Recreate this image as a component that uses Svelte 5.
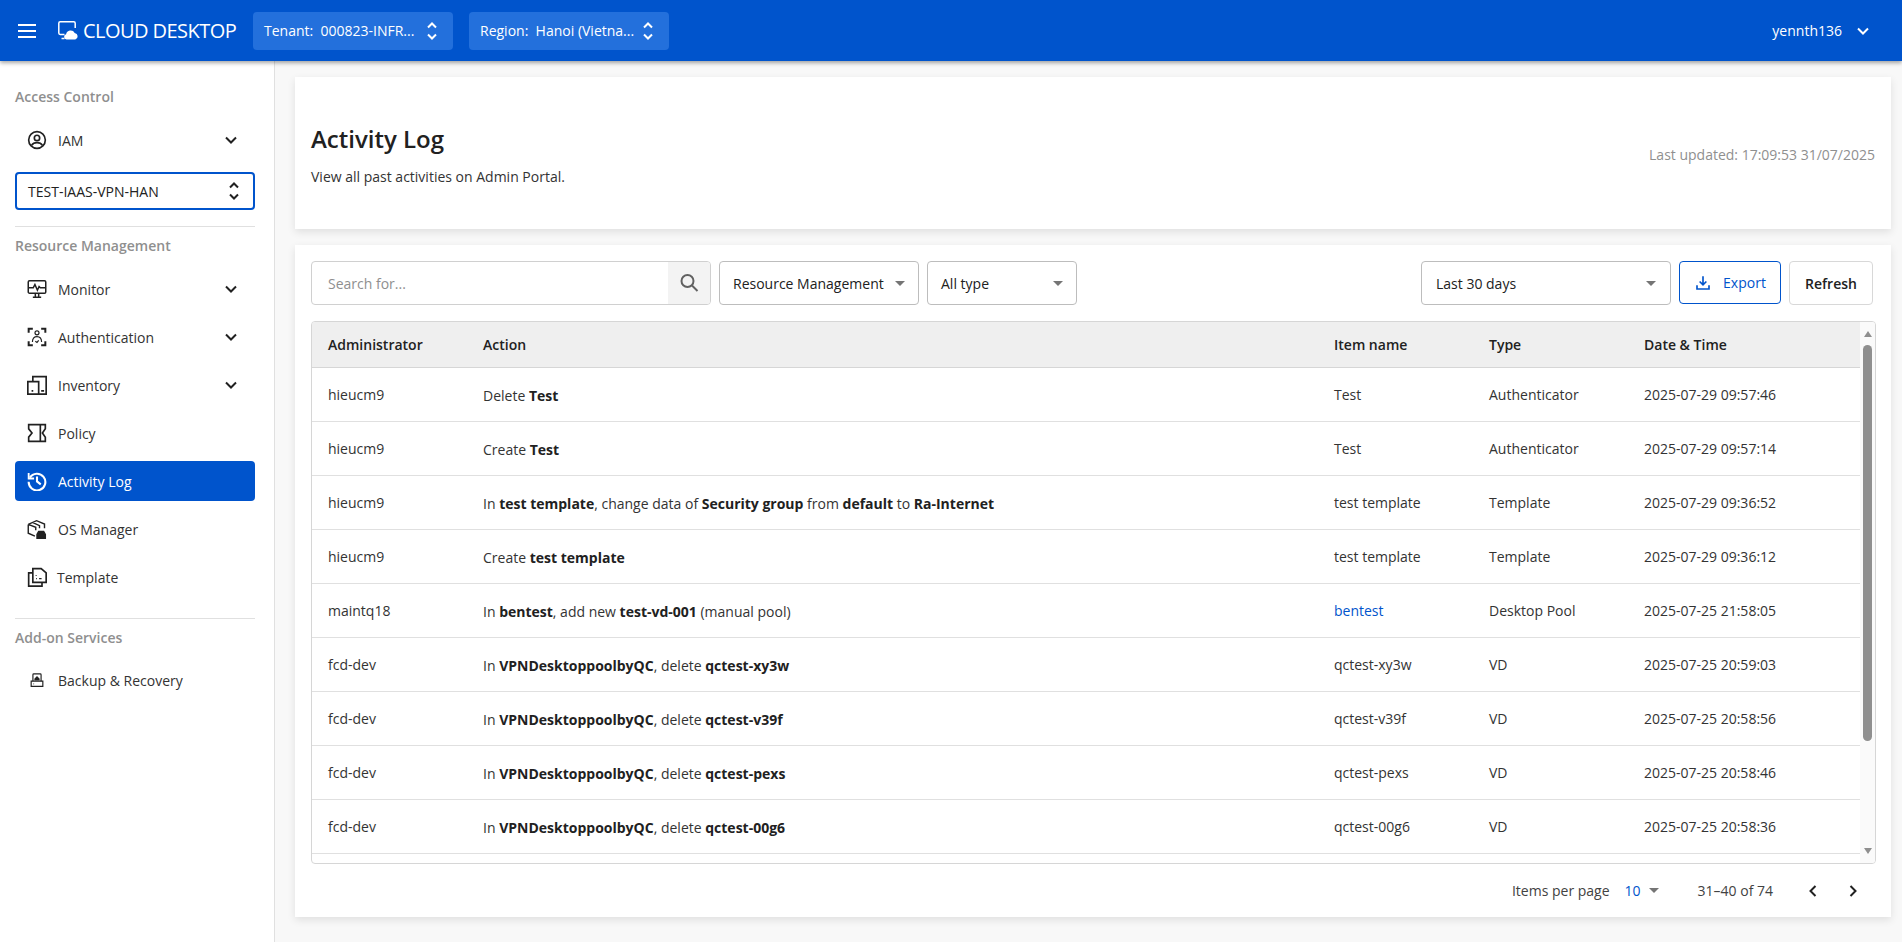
<script>
  const rows = [
    ['hieucm9', [['Delete '], ['Test', 1]], 'Test', 'Authenticator', '2025-07-29 09:57:46'],
    ['hieucm9', [['Create '], ['Test', 1]], 'Test', 'Authenticator', '2025-07-29 09:57:14'],
    ['hieucm9', [['In '], ['test template', 1], [', change data of '], ['Security group', 1], [' from '], ['default', 1], [' to '], ['Ra-Internet', 1]], 'test template', 'Template', '2025-07-29 09:36:52'],
    ['hieucm9', [['Create '], ['test template', 1]], 'test template', 'Template', '2025-07-29 09:36:12'],
    ['maintq18', [['In '], ['bentest', 1], [', add new '], ['test-vd-001', 1], [' (manual pool)']], 'bentest', 'Desktop Pool', '2025-07-25 21:58:05', true],
    ['fcd-dev', [['In '], ['VPNDesktoppoolbyQC', 1], [', delete '], ['qctest-xy3w', 1]], 'qctest-xy3w', 'VD', '2025-07-25 20:59:03'],
    ['fcd-dev', [['In '], ['VPNDesktoppoolbyQC', 1], [', delete '], ['qctest-v39f', 1]], 'qctest-v39f', 'VD', '2025-07-25 20:58:56'],
    ['fcd-dev', [['In '], ['VPNDesktoppoolbyQC', 1], [', delete '], ['qctest-pexs', 1]], 'qctest-pexs', 'VD', '2025-07-25 20:58:46'],
    ['fcd-dev', [['In '], ['VPNDesktoppoolbyQC', 1], [', delete '], ['qctest-00g6', 1]], 'qctest-00g6', 'VD', '2025-07-25 20:58:36']
  ];
</script>

{#snippet updown()}
  <svg class="updown" viewBox="0 0 12 24" width="12" height="24" fill="none" stroke="currentColor" stroke-width="2"><path d="M2 8.500 6 4.500l4 4M2 15.500l4 4 4-4"/></svg>
{/snippet}
{#snippet chev()}
  <svg class="chev" viewBox="0 0 24 24" width="24" height="24" fill="none" stroke="currentColor" stroke-width="2"><path d="m7 9.500 5 5 5-5"/></svg>
{/snippet}
{#snippet caret()}
  <span class="caret"></span>
{/snippet}

<div class="page">
  <header class="top">
    <svg class="burger" viewBox="0 0 18 14" width="18" height="14" fill="#fff"><rect y="0" width="18" height="2"/><rect y="6" width="18" height="2"/><rect y="12" width="18" height="2"/></svg>
    <div class="logo">
      <svg viewBox="0 0 20 19" width="20" height="19"><path d="M6.500 13.500H2.200A1.400 1.400 0 0 1 .8 12.100V2.200A1.400 1.400 0 0 1 2.200 .8H15.800A1.400 1.400 0 0 1 17.200 2.200V7M3.500 17.500h3" fill="none" stroke="#fff" stroke-width="1.500"/><path d="M8.500 18.500a2.700 2.700 0 0 1-.4-5.300 4.600 4.600 0 0 1 8.600-1.300 3.400 3.400 0 0 1 .6 6.600z" fill="#fff"/></svg>
      <span>CLOUD DESKTOP</span>
    </div>
    <div class="pick"><span class="picktext">Tenant:&nbsp; 000823-INFR...</span>{@render updown()}</div>
    <div class="pick"><span class="picktext">Region:&nbsp; Hanoi (Vietna...</span>{@render updown()}</div>
    <div class="user"><span>yennth136</span>{@render chev()}</div>
  </header>

  <div class="body">
    <nav class="side">
      <div class="label first">Access Control</div>
      <div class="item">
        <svg class="ic" viewBox="0 0 24 24" fill="none" stroke="currentColor" stroke-width="2"><circle cx="12" cy="12" r="10"/><circle cx="12" cy="9.500" r="3.200"/><path d="M5.500 18.500c1.500-2.500 4-3.300 6.500-3.300s5 .8 6.500 3.300"/></svg>
        <span>IAM</span>{@render chev()}
      </div>
      <div class="project"><span>TEST-IAAS-VPN-HAN</span>{@render updown()}</div>
      <hr />
      <div class="label">Resource Management</div>
      <div class="item">
        <svg class="ic" viewBox="0 0 24 24" fill="none" stroke="currentColor" stroke-width="1.800"><rect x="1.500" y="2" width="21" height="15" rx="1.500"/><path d="M7 22h10M10 17v5M14 17v5M1.500 10.500h6l2-4 3 7 2-4.500 1.500 1.500h6.500"/></svg>
        <span>Monitor</span>{@render chev()}
      </div>
      <div class="item">
        <svg class="ic" viewBox="0 0 24 24" fill="none" stroke="currentColor" stroke-width="2.400"><path d="M7 2H2v5M17 2h5v5M2 17v5h5M22 17v5h-5"/><g stroke-width="1.400"><circle cx="12" cy="7" r="2.400"/><path d="M6.500 18c0-4.500 2.200-6.500 5.500-6.500s5.500 2 5.500 6.500M10 17l2 1.500 2-2.500"/></g></svg>
        <span>Authentication</span>{@render chev()}
      </div>
      <div class="item">
        <svg class="ic" viewBox="0 0 24 24" fill="none" stroke="currentColor" stroke-width="2"><path d="M7 8V2h16v21H1V8h13v15"/><path d="M5.500 19h2M17 19h3.500"/></svg>
        <span>Inventory</span>{@render chev()}
      </div>
      <div class="item">
        <svg class="ic" viewBox="0 0 24 24" fill="none" stroke="currentColor" stroke-width="2"><path d="M2 2h20v5l-3.500 5 3.500 5v5H2v-5l4-5-4-5zM16 2v20"/></svg>
        <span>Policy</span>
      </div>
      <div class="item active">
        <svg class="ic" viewBox="0 0 24 24" fill="none" stroke="currentColor" stroke-width="2.500"><path d="M3.500 8A10 10 0 1 1 2 13"/><path d="M2 2.500V9h6.500" stroke-width="2.200"/><path d="M12 6.500v6l4.500 3.500" /></svg>
        <span>Activity Log</span>
      </div>
      <div class="item">
        <svg class="ic" viewBox="0 0 24 24" fill="none" stroke="currentColor" stroke-width="1.700"><path d="M1.500 6.500 11.500 2l9.500 4v5M1.500 6.500V17l8 3.500M1.500 6.500 10.500 10v3.500M6.500 4l8.500 4v3"/><path d="M12 23v-4.500l2-3.500h6l2 3.500V23z" fill="currentColor"/></svg>
        <span>OS Manager</span>
      </div>
      <div class="item tpl">
        <svg class="ic" viewBox="0 0 24 24" fill="none" stroke="currentColor" stroke-width="2"><path d="M7 18.500V2h10l6 5v11.500z"/><path d="M7 7H2v16h16v-4.500"/><path d="M11 9.500v1M11 14h1M14.500 14h3" stroke-width="1.600"/></svg>
        <span>Template</span>
      </div>
      <hr class="low" />
      <div class="label tight">Add-on Services</div>
      <div class="item">
        <svg class="ic small" viewBox="0 0 24 24" fill="none" stroke="currentColor" stroke-width="2"><path d="M5 14V3a1.500 1.500 0 0 1 1.500-1.500h11A1.500 1.500 0 0 1 19 3v11"/><path d="M2 14h20v9H2z"/><path d="M12 5l4.500 5v3h-9v-3z" fill="currentColor" stroke="none"/><path d="M6 18.500h1" /></svg>
        <span>Backup &amp; Recovery</span>
      </div>
    </nav>

    <main class="main">
      <section class="card head">
        <div>
          <h1>Activity Log</h1>
          <p>View all past activities on Admin Portal.</p>
        </div>
        <div class="updated">Last updated: 17:09:53 31/07/2025</div>
      </section>

      <section class="card log">
        <div class="tools">
          <div class="search">
            <span class="ph">Search for...</span>
            <span class="sbtn"><svg viewBox="0 0 24 24" width="24" height="24" fill="none" stroke="#616161" stroke-width="2"><circle cx="10.500" cy="10" r="6"/><path d="m15 14.500 5.500 5.500"/></svg></span>
          </div>
          <div class="sel s1"><span>Resource Management</span>{@render caret()}</div>
          <div class="sel s2"><span>All type</span>{@render caret()}</div>
          <div class="sel s3"><span>Last 30 days</span>{@render caret()}</div>
          <button class="btn export"><svg viewBox="0 0 24 24" width="18" height="18" fill="none" stroke="#0054cc" stroke-width="2.200"><path d="M12 3v11M7.500 10l4.500 4.500 4.500-4.500M4 15v5h16v-5"/></svg><span>Export</span></button>
          <button class="btn refresh">Refresh</button>
        </div>

        <div class="tablewrap">
          <div class="scrollarea">
            <table>
              <colgroup><col class="c1" /><col /><col class="c3" /><col class="c4" /><col class="c5" /></colgroup>
              <thead><tr><th>Administrator</th><th>Action</th><th>Item name</th><th>Type</th><th>Date &amp; Time</th></tr></thead>
              <tbody>
                {#each rows as r}
                  <tr>
                    <td>{r[0]}</td>
                    <td class="action">{#each r[1] as p}{#if p[1]}<b>{p[0]}</b>{:else}{p[0]}{/if}{/each}</td>
                    <td class:link={r[5]}>{r[2]}</td>
                    <td>{r[3]}</td>
                    <td>{r[4]}</td>
                  </tr>
                {/each}
              </tbody>
            </table>
          </div>
          <div class="sb">
            <span class="up"></span>
            <span class="thumb"></span>
            <span class="down"></span>
          </div>
        </div>

        <div class="pager">
          <span>Items per page</span>
          <span class="size">10</span>{@render caret()}
          <span class="range">31–40 of 74</span>
          <svg class="pg" viewBox="0 0 24 24" width="24" height="24" fill="none" stroke="#212121" stroke-width="2"><path d="m14.500 7-5 5 5 5"/></svg>
          <svg class="pg" viewBox="0 0 24 24" width="24" height="24" fill="none" stroke="#212121" stroke-width="2"><path d="m9.500 7 5 5-5 5"/></svg>
        </div>
      </section>
    </main>
  </div>
</div>

<style>
  :global(body) { margin: 0; font-family: "Open Sans", "Noto Sans", sans-serif; font-size: 14px; color: #212121; background: #f8f8f8; }
  .page { width: 1902px; height: 942px; display: flex; flex-direction: column; overflow: hidden; }
  .top { height: 61px; flex: none; background: #0054cc; color: #fff; display: flex; align-items: center; padding: 0 0 0 18px; box-shadow: 0 2px 4px rgba(0,0,0,.35); position: relative; z-index: 2; box-sizing: border-box; }
  .burger { flex: none; margin-right: 22px; }
  .logo { display: flex; align-items: center; gap: 5px; width: 195px; font-size: 20px; letter-spacing: -.55px; white-space: nowrap; }
  .logo svg { flex: none; }
  .pick { width: 200px; height: 38px; box-sizing: border-box; background: #2370dc; border-radius: 4px; display: flex; align-items: center; justify-content: space-between; padding: 0 15px 0 11px; margin-right: 16px; font-size: 14px; }
  .picktext { white-space: nowrap; }
  .updown { flex: none; }
  .user { margin-left: auto; display: flex; align-items: center; gap: 9px; margin-right: 27px; font-size: 14px; }
  .body { flex: 1; display: flex; min-height: 0; }
  .side { width: 275px; flex: none; box-sizing: border-box; background: #fff; border-right: 1px solid #e0e0e0; padding: 0 19px 0 15px; }
  .label { font-weight: 600; font-size: 14px; line-height: 20px; color: #8f8f8f; margin-bottom: 13px; }
  .label.first { margin-top: 26px; }
  .label.tight { margin-bottom: 12px; }
  .item { height: 40px; margin-bottom: 8px; display: flex; align-items: center; padding-left: 12px; padding-right: 12px; border-radius: 4px; color: #333; font-size: 14px; }
  .item span { flex: 1; margin-left: 11px; }
  .item.tpl span { margin-left: 10px; }
  .ic { width: 20px; height: 20px; flex: none; color: #212121; }
  .ic.small { width: 14px; height: 16px; margin: 0 3px; }
  .chev { flex: none; color: #212121; }
  .user .chev { color: #fff; }
  .item.active { background: #0054cc; color: #fff; }
  .item.active .ic { color: #fff; }
  .project { height: 38px; box-sizing: border-box; margin-top: 12px; border: 2px solid #0054cc; border-radius: 4px; display: flex; align-items: center; justify-content: space-between; padding: 0 13px 0 11px; color: #212121; }
  hr { border: 0; border-top: 1px solid #e0e0e0; margin: 16px 0 9px; }
  hr.low { margin-top: 21px; }
  .main { flex: 1; min-width: 0; padding: 16px 11px 0 20px; display: flex; flex-direction: column; gap: 16px; }
  .card { background: #fff; box-shadow: 0 3px 8px rgba(0,0,0,.1); }
  .head { height: 152px; flex: none; box-sizing: border-box; padding: 2px 16px 0; display: flex; align-items: center; justify-content: space-between; }
  h1 { margin: 0 0 10px; font-size: 24px; font-weight: 600; line-height: 36px; color: #212121; }
  p { margin: 0; font-size: 14px; line-height: 20px; color: #333; }
  .updated { color: #8f8f8f; font-size: 14px; margin-top: 1px; }
  .log { height: 672px; flex: none; box-sizing: border-box; padding: 16px 16px 0; display: flex; flex-direction: column; }
  .tools { display: flex; height: 44px; flex: none; padding-right: 2px; }
  .search { width: 400px; box-sizing: border-box; border: 1px solid #d0d0d0; border-radius: 4px; display: flex; justify-content: space-between; align-items: center; overflow: hidden; padding-left: 16px; }
  .ph { color: #8f8f8f; }
  .sbtn { width: 42px; height: 100%; background: #f3f3f3; display: flex; align-items: center; justify-content: center; }
  .sel { box-sizing: border-box; border: 1px solid #bdbdbd; border-radius: 4px; display: flex; align-items: center; justify-content: space-between; padding: 0 13px; color: #212121; }
  .s1 { width: 200px; margin-left: 8px; }
  .s2 { width: 150px; margin-left: 8px; }
  .s3 { width: 250px; margin-left: auto; padding: 0 14px; }
  .caret { flex: none; width: 0; height: 0; border-left: 5px solid transparent; border-right: 5px solid transparent; border-top: 5px solid #757575; }
  .btn { font: inherit; background: #fff; border-radius: 4px; cursor: pointer; }
  .export { width: 102px; height: 43px; margin-left: 8px; border: 1px solid #0054cc; color: #0054cc; display: flex; align-items: center; justify-content: center; gap: 11px; padding: 0; }
  .refresh { width: 84px; margin-left: 8px; border: 1px solid #d8d8d8; color: #212121; font-weight: 600; padding: 0; }
  .tablewrap { height: 543px; flex: none; margin-top: 16px; margin-right: -1px; box-sizing: border-box; border: 1px solid #d6d6d6; border-radius: 4px; display: flex; overflow: hidden; }
  .scrollarea { flex: 1; min-width: 0; overflow: hidden; }
  table { width: 100%; border-collapse: separate; border-spacing: 0; table-layout: fixed; }
  .c1 { width: 155px; }
  .c3 { width: 155px; }
  .c4 { width: 155px; }
  .c5 { width: 232px; }
  th { height: 46px; box-sizing: border-box; background: #efefef; border-bottom: 1px solid #d6d6d6; text-align: left; padding: 0 16px; font-weight: 600; color: #212121; }
  td { height: 54px; box-sizing: border-box; border-bottom: 1px solid #e0e0e0; padding: 0 16px; color: #333; white-space: nowrap; }
  td.action { padding-top: 2px; }
  td b { font-weight: 700; color: #212121; }
  td.link { color: #0054cc; }
  .sb { width: 15px; flex: none; background: #fafafa; display: flex; flex-direction: column; align-items: center; position: relative; }
  .up { margin-top: 9px; width: 0; height: 0; border-left: 4.500px solid transparent; border-right: 4.500px solid transparent; border-bottom: 6px solid #8f8f8f; }
  .thumb { margin-top: 8px; width: 9px; height: 396px; border-radius: 5px; background: #8f8f8f; }
  .down { position: absolute; bottom: 9px; width: 0; height: 0; border-left: 4.500px solid transparent; border-right: 4.500px solid transparent; border-top: 6px solid #8f8f8f; }
  .pager { flex: 1; display: flex; align-items: center; justify-content: flex-end; color: #424242; padding-right: 10px; }
  .size { margin-left: 15px; margin-right: 8px; color: #0054cc; }
  .range { margin-left: 39px; margin-right: 28px; }
  .pg + .pg { margin-left: 16px; }
</style>
